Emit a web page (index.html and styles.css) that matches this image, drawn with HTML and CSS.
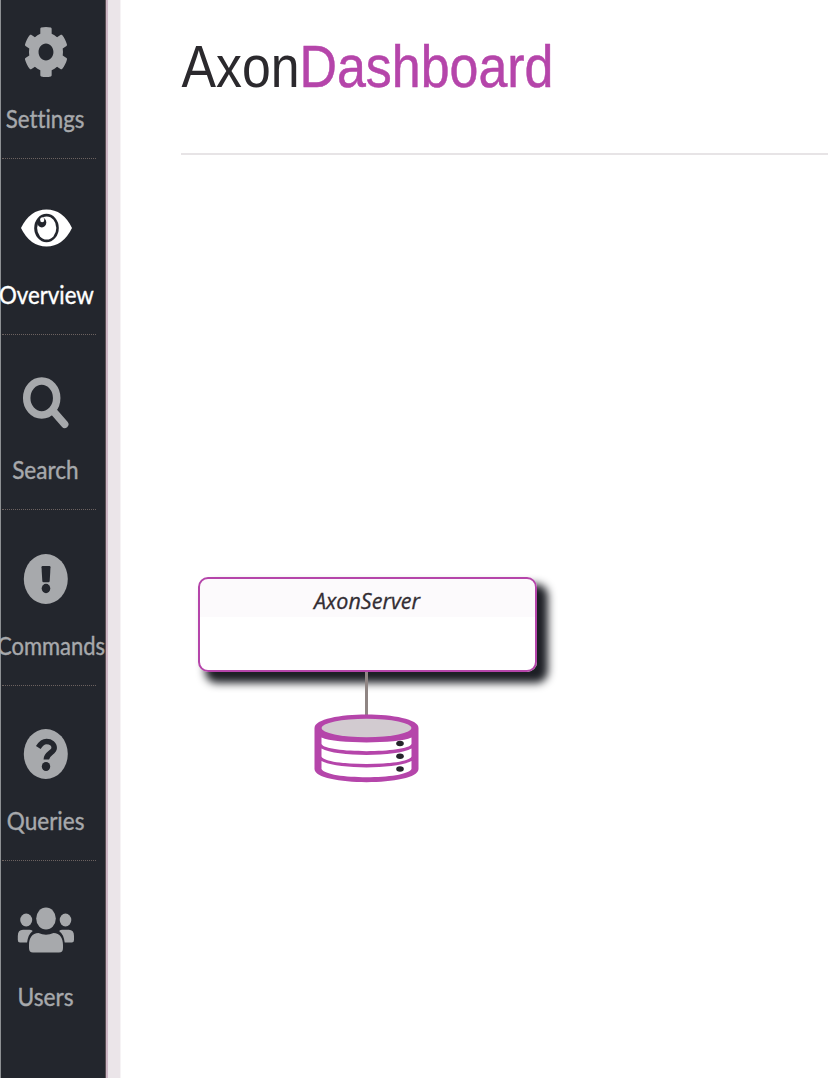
FILE: index.html
```html
<!DOCTYPE html>
<html lang="en">
<head>
<meta charset="utf-8">
<title>AxonDashboard</title>
<link rel="stylesheet" href="styles.css">
</head>
<body>
<nav class="sidebar">
  <a class="item">
    <svg class="glyph" viewBox="0 0 106 100"><path transform="translate(23.3 26.2) scale(.0886 .1008)" d="M487.4 315.7l-42.6-24.6c4.3-23.2 4.3-47 0-70.2l42.6-24.6c4.9-2.8 7.1-8.6 5.5-14-11.1-35.6-30-67.8-54.7-94.6-3.8-4.1-10-5.1-14.8-2.3L380.8 110c-17.9-15.4-38.5-27.3-60.8-35.1V25.8c0-5.6-3.9-10.5-9.4-11.7-36.7-8.2-74.3-7.8-109.2 0-5.5 1.2-9.4 6.1-9.4 11.7V75c-22.2 7.9-42.8 19.8-60.8 35.1L88.7 85.5c-4.9-2.8-11-1.9-14.8 2.3-24.7 26.7-43.6 58.900-54.700 94.600-1.700 5.400.6 11.200 5.500 14L67.300 221c-4.300 23.200-4.300 47 0 70.200l-42.600 24.600c-4.900 2.800-7.100 8.600-5.500 14 11.100 35.600 30 67.800 54.700 94.600 3.800 4.100 10 5.100 14.800 2.300l42.600-24.600c17.900 15.400 38.500 27.300 60.800 35.100v49.200c0 5.600 3.900 10.500 9.400 11.700 36.700 8.200 74.300 7.800 109.200 0 5.500-1.200 9.400-6.100 9.400-11.700v-49.200c22.200-7.900 42.800-19.800 60.800-35.100l42.600 24.600c4.900 2.800 11 1.900 14.800-2.300 24.700-26.700 43.600-58.900 54.700-94.600 1.500-5.500-.7-11.300-5.600-14.100zM256 340c-46 0-84-37.900-84-84s38-84 84-84 84 38 84 84-38 84-84 84z"/></svg>
    <svg class="label" viewBox="0 0 106 59"><text x="5" y="28" textLength="80" lengthAdjust="spacingAndGlyphs">Settings</text></svg>
  </a>
  <a class="item active">
    <svg class="glyph" viewBox="0 0 106 100"><path d="M21 52Q30 33.500 46.500 33.500T72 52Q63 70.500 46.500 70.500T21 52z"/><ellipse class="dark" cx="46.500" cy="52" rx="12.300" ry="14.300"/><ellipse cx="46.700" cy="52" rx="9.600" ry="11.600"/><ellipse class="dark" cx="41.800" cy="46.500" rx="4.500" ry="5"/><ellipse cx="42.200" cy="43.800" rx="2.100" ry="2.500"/></svg>
    <svg class="label" viewBox="0 0 106 59"><text x="-2" y="28" textLength="96.500" lengthAdjust="spacingAndGlyphs">Overview</text></svg>
  </a>
  <a class="item">
    <svg class="glyph" viewBox="0 0 106 100"><ellipse class="ring" cx="41.700" cy="47" rx="15" ry="17"/><path class="handle" d="M54 61L64.700 73.300"/></svg>
    <svg class="label" viewBox="0 0 106 59"><text x="11.500" y="28" textLength="67.500" lengthAdjust="spacingAndGlyphs">Search</text></svg>
  </a>
  <a class="item">
    <svg class="glyph" viewBox="0 0 106 100"><ellipse cx="45.800" cy="52" rx="22" ry="25"/><path class="dark" d="M42.500 39h7q1 0 1 1.200L49.700 54q-.1 1.200-1.200 1.200h-5q-1.100 0-1.200-1.200L41.500 40.200q0-1.200 1-1.200z"/><ellipse class="dark" cx="46" cy="61.500" rx="4.300" ry="4.700"/></svg>
    <svg class="label" viewBox="0 0 106 59"><text x="-4" y="28" textLength="110" lengthAdjust="spacingAndGlyphs">Commands</text></svg>
  </a>
  <a class="item">
    <svg class="glyph" viewBox="0 0 106 100"><ellipse cx="45.800" cy="52" rx="22" ry="25"/><path class="hook" d="M38.300 45.500Q42 39.500 46.500 39.500C51 39.500 54.200 42 54.200 46C54.200 50.500 46.300 51.300 46.300 57.500"/><ellipse class="dark" cx="46" cy="64.500" rx="4.200" ry="4.600"/></svg>
    <svg class="label" viewBox="0 0 106 59"><text x="6" y="28" textLength="79" lengthAdjust="spacingAndGlyphs">Queries</text></svg>
  </a>
  <a class="item">
    <svg class="glyph" viewBox="0 0 106 100"><ellipse cx="46" cy="40.500" rx="9.800" ry="11"/><ellipse cx="26.200" cy="42" rx="6" ry="6.500"/><ellipse cx="65.500" cy="42" rx="5.800" ry="6.500"/><path d="M38.500 55Q46 58.500 53.500 55C60 55 63 60 63 67v3q0 4.500-4 4.500H33q-4 0-4-4.500v-3c0-7 3-12 9.500-12z"/><path d="M23 51.800h6.500q2 0 3.200 1.200c-3.500 2.500-5 6.500-5.600 11.500H20q-2.200 0-2.200-2.500V58q0-6.200 5.200-6.200zM68.800 51.800h-6.500q-2 0-3.200 1.200c3.500 2.500 5 6.500 5.600 11.500h7.100q2.200 0 2.200-2.500V58q0-6.200-5.200-6.200z"/></svg>
    <svg class="label" viewBox="0 0 106 59"><text x="17" y="28" textLength="57" lengthAdjust="spacingAndGlyphs">Users</text></svg>
  </a>
</nav>
<main class="content">
  <header class="header">
    <svg class="title" viewBox="0 0 647 153"><text x="0.500" y="87" textLength="118" lengthAdjust="spacingAndGlyphs">Axon</text><text class="accent" x="118.500" y="87" textLength="254" lengthAdjust="spacingAndGlyphs">Dashboard</text></svg>
  </header>
  <section class="overview">
    <div class="server"><svg class="name" viewBox="0 0 336 91"><text x="114" y="29.500" textLength="106" lengthAdjust="spacingAndGlyphs">AxonServer</text></svg></div>
    <svg class="store" viewBox="0 0 106 112">
      <path class="link" d="M52.500 1V46"/>
      <path class="disk" d="M.5 57C.5 39 104.500 39 104.500 57V98C104.500 115.500 .5 115.500 .5 98z"/>
      <ellipse class="lid" cx="52.500" cy="57" rx="45" ry="9.300"/>
      <path class="tray" d="M7.500 66.500C22 73 83 73 97.500 66.500V73C94 82.500 11 82.500 7.500 73zM7.500 77.500C22 86 83 86 97.500 77.500V85.500C94 95.500 11 95.500 7.500 85.500zM7.500 90C22 98.500 83 98.500 97.500 90V98C92 109 13 109 7.500 98z"/>
      <g class="lamps"><ellipse cx="86" cy="72.500" rx="3.800" ry="2.700"/><ellipse cx="86" cy="85.200" rx="3.800" ry="2.700"/><ellipse cx="86" cy="98" rx="3.800" ry="2.700"/></g>
    </svg>
  </section>
</main>
</body>
</html>
```
FILE: styles.css
```css
* { box-sizing: border-box; }
body { margin: 0; height: 1079px; display: flex; overflow: hidden; background: #fff; }
.sidebar { width: 121px; height: 1078px; flex: none; overflow: hidden; background: linear-gradient(90deg, #8d9093 0 1px, #23262d 1px 105px, #5c5054 105px 106px, #cdb7c5 106px 108px, #ebe5e9 108px 120px, #f6f3f5 120px); }
.item { display: flex; flex-direction: column; width: 106px; height: 175.6px; color: #a7a9ac; }
.item:first-child { height: 159px; }
.item::after { content: ""; width: 94px; margin-left: 2px; border-bottom: 1px dotted #6c6260; }
.item:last-child::after { display: none; }
.item.active { color: #fff; }
.glyph { width: 106px; height: 100px; flex: none; fill: currentColor; }
.item:not(:first-child) .glyph { margin-top: 16.6px; }
.label { width: 106px; height: 58px; flex: none; overflow: visible; fill: currentColor; font: 25px Lato, sans-serif; font-variant-ligatures: none; stroke: currentColor; stroke-width: .4px; }
.dark { fill: #23262d; }
.ring { fill: none; stroke: currentColor; stroke-width: 7.5px; }
.handle { stroke: currentColor; stroke-width: 7.5px; stroke-linecap: round; }
.hook { fill: none; stroke: #23262d; stroke-width: 5.5px; }
.content { flex: 1; padding-left: 60px; }
.header { height: 155px; border-bottom: 2px solid #e7e4e6; }
.title { display: block; width: 647px; height: 153px; font: 58.5px "Liberation Sans", Arial, sans-serif; fill: #2b292d; }
.accent { fill: #b545aa; stroke: #b545aa; stroke-width: .5px; }
.overview { width: 374px; padding: 422px 0 0 17px; }
.server { width: 339px; height: 95px; border: 2px solid #b545aa; border-radius: 10px; background: linear-gradient(#fcfafc 0 38px, #fff 38px); box-shadow: 9px 9px 9px 2px #1d1f25; }
.name { display: block; width: 336px; height: 91px; font: italic 21.5px "Open Sans", "Noto Sans", sans-serif; fill: #332d33; stroke: #332d33; stroke-width: .3px; }
.store { display: block; position: relative; width: 106px; height: 112px; margin: -1px 0 0 116px; }
.link { stroke: #8f8583; stroke-width: 3px; }
.disk { fill: #b545aa; }
.lid { fill: #d2cbd0; }
.tray { fill: #fff; }
.lamps { fill: #26252b; }
```
